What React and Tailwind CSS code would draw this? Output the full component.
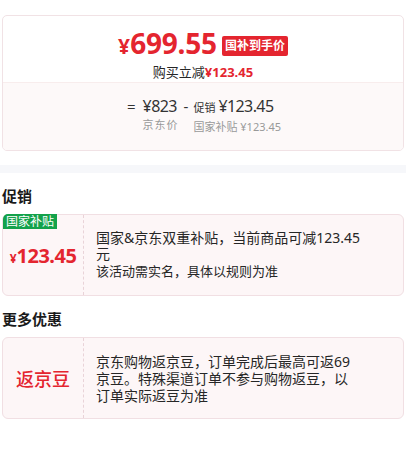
const font = { fontFamily: '"Noto Sans", "Noto Sans CJK SC", sans-serif' };

function Section({ title, children }) {
  return (
    <div className="px-[2px]">
      <h2 className="mt-[12px] mb-[7px] text-[15px] font-bold leading-[22px] text-[#1a1a1a]">{title}</h2>
      {children}
    </div>
  );
}

function PromoCard({ left, tag, pr = 'pr-[40px]', children }) {
  return (
    <div className="relative flex h-[82px] rounded-[6px] border border-[#f1dfe3] bg-[#fdf6f7]">
      {tag && (
        <span className="absolute top-[-1px] left-[0px] rounded-tl-[5px] bg-[#13a24b] px-[3px] text-[12px] leading-[15px] text-white">
          {tag}
        </span>
      )}
      <div className="flex w-[81px] shrink-0 items-center justify-center border-r border-dashed border-[#e9d3d8] pt-[2px]">
        {left}
      </div>
      <div className={`flex flex-1 flex-col justify-center pl-[12px] ${pr} text-[14px] leading-[17px] text-[#262626]`}>
        {children}
      </div>
    </div>
  );
}

export default function App() {
  return (
    <div className="w-[406px] h-[461px] bg-white pt-[15px]" style={font}>
      <div className="mx-[2px] overflow-hidden rounded-[5px] border border-[#f1e2e5]">
        <div className="flex h-[66px] flex-col items-center pt-[13px]">
          <div className="flex items-center">
            <span className="text-[#e4252f] font-bold leading-[28px]">
              <span className="text-[21px]">¥</span>
              <span className="text-[28px] tracking-[-0.2px]">699.55</span>
            </span>
            <span className="ml-[5px] rounded-[2px] bg-[#e4252f] px-[3px] text-[12px] font-bold leading-[20px] text-white">
              国补到手价
            </span>
          </div>
          <div className="mt-[1px] text-[13px] leading-[18px] text-[#262626]">
            购买立减<span className="font-bold text-[#e4252f]">¥123.45</span>
          </div>
        </div>
        <div className="flex h-[68px] justify-center border-t border-[#f8eded] bg-[#fdf9f9] pt-[12px] pl-[2px]">
          <div className="flex items-start">
            <span className="mr-[7px] text-[15px] leading-[22px] text-[#333]">=</span>
            <div className="flex flex-col">
              <span className="text-[16px] tracking-[-0.6px] leading-[22px] text-[#333]">¥823</span>
              <span className="mt-[1px] text-[11px] tracking-[1px] leading-[14px] text-[#999]">京东价</span>
            </div>
            <span className="mx-[5px] text-[15px] leading-[22px] text-[#333]">-</span>
            <div className="flex flex-col">
              <span className="text-[16px] tracking-[-0.6px] leading-[22px] text-[#333]">
                <span className="mr-[3px] text-[11px] tracking-normal">促销</span>¥123.45
              </span>
              <span className="mt-[1px] text-[11px] leading-[14px] text-[#999]">国家补贴 ¥123.45</span>
            </div>
          </div>
        </div>
      </div>

      <div className="mt-[14px] h-[8px] bg-[#f6f7fa]" />

      <Section title="促销">
        <PromoCard
          tag="国家补贴"
          left={
            <span className="font-bold text-[#e4252f]">
              <span className="text-[12px]">¥</span>
              <span className="text-[20px] tracking-[-0.5px]">123.45</span>
            </span>
          }
        >
          <p className="leading-[16px]">国家&amp;京东双重补贴，当前商品可减123.45元</p>
          <p className="mt-[1px] text-[13px] leading-[17px]">该活动需实名，具体以规则为准</p>
        </PromoCard>
      </Section>

      <Section title="更多优惠">
        <PromoCard pr="pr-[50px]" left={<span className="text-[18px] font-medium text-[#e4252f]">返京豆</span>}>
          <p>京东购物返京豆，订单完成后最高可返69京豆。特殊渠道订单不参与购物返豆，以订单实际返豆为准</p>
        </PromoCard>
      </Section>
    </div>
  );
}
